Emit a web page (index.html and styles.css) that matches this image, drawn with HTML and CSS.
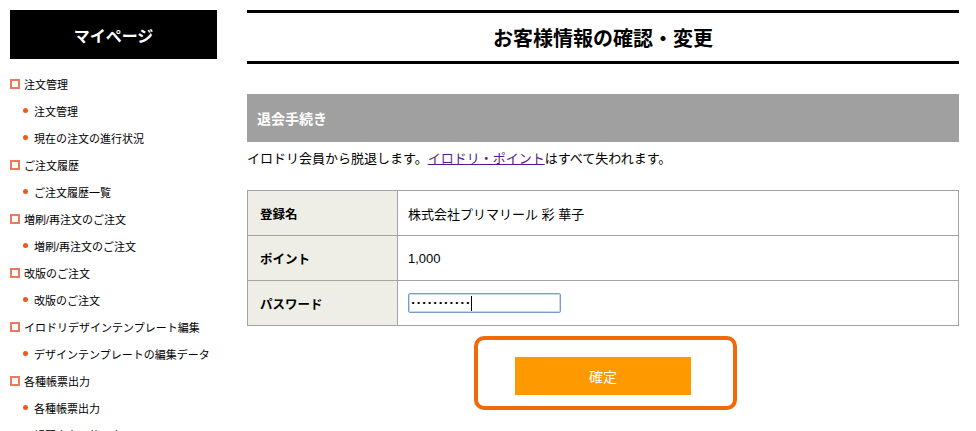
FILE: index.html
```html
<!DOCTYPE html>
<html lang="ja">
<head>
<meta charset="utf-8">
<title>お客様情報の確認・変更</title>
<link rel="stylesheet" href="styles.css">
</head>
<body>
<div class="page">
  <aside class="sidebar">
    <div class="side-head">マイページ</div>
    <ul class="menu">
      <li class="cat">注文管理</li>
      <li class="sub">注文管理</li>
      <li class="sub">現在の注文の進行状況</li>
      <li class="cat">ご注文履歴</li>
      <li class="sub">ご注文履歴一覧</li>
      <li class="cat">増刷/再注文のご注文</li>
      <li class="sub">増刷/再注文のご注文</li>
      <li class="cat">改版のご注文</li>
      <li class="sub">改版のご注文</li>
      <li class="cat">イロドリデザインテンプレート編集</li>
      <li class="sub">デザインテンプレートの編集データ</li>
      <li class="cat">各種帳票出力</li>
      <li class="sub">各種帳票出力</li>
      <li class="sub">帳票出力の使い方 PDF</li>
    </ul>
  </aside>
  <main class="main">
    <h1 class="title">お客様情報の確認・変更</h1>
    <h2 class="section-bar">退会手続き</h2>
    <p class="lead">イロドリ会員から脱退します。<a href="#" class="link">イロドリ・ポイント</a>はすべて失われます。</p>
    <table class="info">
      <colgroup><col class="col-label"><col></colgroup>
      <tr><th>登録名</th><td>株式会社プリマリール 彩 華子</td></tr>
      <tr><th>ポイント</th><td class="num">1,000</td></tr>
      <tr><th>パスワード</th><td><div class="pw"><span class="dots">...........</span><span class="caret"></span></div></td></tr>
    </table>
    <div class="confirm-wrap">
      <button class="confirm" type="button">確定</button>
    </div>
  </main>
</div>
</body>
</html>
```
FILE: styles.css
```css
html, body {
  margin: 0;
  padding: 0;
  background: #fff;
  color: #000;
  font-family: "Liberation Sans", "Noto Sans CJK JP", sans-serif;
}

.page {
  display: flex;
  gap: 30px;
  padding: 10px 17px 0 10px;
  height: 421px;
  overflow: hidden;
}

.sidebar {
  width: 207px;
  flex: none;
}

.side-head {
  height: 49px;
  background: #000;
  color: #fff;
  font-size: 16px;
  font-weight: bold;
  display: flex;
  align-items: center;
  justify-content: center;
}

.menu {
  list-style: none;
  margin: 11px 0 0;
  padding: 0;
  font-size: 11px;
}

.menu li {
  height: 27px;
  display: flex;
  align-items: center;
  white-space: nowrap;
}

.cat::before {
  content: "";
  width: 6px;
  height: 6px;
  border: 2px solid #ee7a5c;
  margin-right: 4px;
  flex: none;
}

.sub {
  padding-left: 13px;
}

.sub::before {
  content: "";
  width: 5px;
  height: 5px;
  border-radius: 50%;
  background: #f2581c;
  margin-right: 6px;
  flex: none;
}

.main {
  flex: 1;
  min-width: 0;
}

.title {
  margin: 0;
  height: 48px;
  border-top: 3px solid #000;
  border-bottom: 3px solid #000;
  display: flex;
  align-items: center;
  justify-content: center;
  font-size: 20px;
  font-weight: bold;
}

.section-bar {
  margin: 30px 0 0;
  height: 48px;
  background: #a0a0a0;
  color: #fff;
  font-size: 14px;
  font-weight: bold;
  padding-left: 10px;
  display: flex;
  align-items: center;
}

.lead {
  margin: 8px 0 22px;
  font-size: 13px;
  line-height: 18px;
}

.link {
  color: #551a8b;
  text-decoration: underline;
}

.info {
  width: 100%;
  border-collapse: collapse;
  table-layout: fixed;
  font-size: 13px;
}

.col-label {
  width: 150px;
}

.info th,
.info td {
  border: 1px solid #a3a3a3;
  height: 45px;
  padding: 0 10px;
  box-sizing: border-box;
}

.info th {
  background: #eeede6;
  text-align: left;
  padding-left: 12px;
  font-weight: bold;
  font-size: 12.5px;
}

.pw {
  width: 153px;
  height: 20px;
  box-sizing: border-box;
  border: 1px solid #7b9ccb;
  border-radius: 2px;
  box-shadow: inset 0 0 0 1px #c9d8ee;
  display: flex;
  align-items: center;
  padding-left: 2px;
}

.dots {
  font-family: "DejaVu Sans", sans-serif;
  font-size: 11px;
  font-weight: bold;
  letter-spacing: 1.3px;
  line-height: 1;
  position: relative;
  top: -3px;
}

.caret {
  width: 1px;
  height: 15px;
  background: #000;
}

.confirm-wrap {
  width: 263px;
  box-sizing: border-box;
  margin: 10px 0 0 227px;
  border: 4px solid #f06a0a;
  border-radius: 10px;
  padding: 17px 0 11px 37px;
}

.confirm {
  display: block;
  width: 176px;
  height: 38px;
  border: 0;
  margin: 0;
  background: #ff9900;
  color: #fff;
  font-family: "Noto Sans CJK JP", sans-serif;
  font-size: 14px;
  cursor: pointer;
}
```
